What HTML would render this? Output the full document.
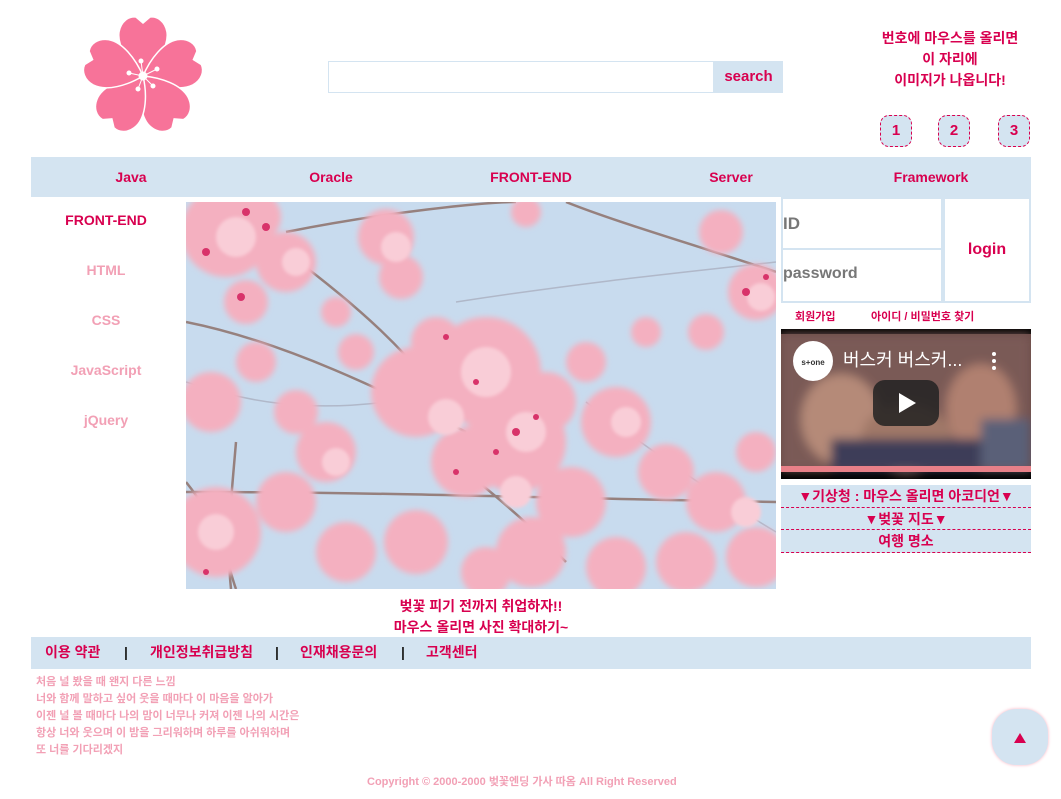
<!DOCTYPE html>
<html><head><meta charset="utf-8">
<style>
*{margin:0;padding:0;box-sizing:border-box}
body{width:1061px;height:799px;background:#fff;font-family:"Liberation Sans","Noto Sans CJK KR",sans-serif;position:relative;overflow:hidden;font-weight:bold}
.a{position:absolute}
.c{color:#d8004f}
.p{color:#f2a0b5}
.lb{background:#d4e4f1}
.nav span{position:absolute;top:0;width:200px;text-align:center;line-height:40px;font-size:14px;color:#d8004f}
.left div{position:absolute;left:0;width:150px;text-align:center;font-size:14px}
.num{position:absolute;top:115px;width:32px;height:32px;border:1px dashed #d8004f;border-radius:9px;background:#d4e4f1;text-align:center;line-height:30px;font-size:15px;color:#d8004f}
.acc div{height:22.7px;border-bottom:1px dashed #d8004f;text-align:center;font-size:14px;color:#d8004f;line-height:22px;background:#d4e4f1}
.poem div{font-size:11px;line-height:17px;color:#f2a0b5}
</style></head><body>

<svg class="a" style="left:80px;top:14px" width="126" height="120" viewBox="0 0 126 120">
<g transform="translate(63,62)" fill="#f77399" stroke="#fff" stroke-width="1.5">
<path id="pt" d="M0,0 C-14,-12 -26,-30 -24,-44 C-22,-55 -14,-60 -7,-59 L0,-53 L7,-59 C14,-60 22,-55 24,-44 C26,-30 14,-12 0,0Z"/>
<use href="#pt" transform="rotate(72)"/><use href="#pt" transform="rotate(144)"/><use href="#pt" transform="rotate(216)"/><use href="#pt" transform="rotate(288)"/>
<g stroke="#fff" stroke-width="1" fill="#fff">
<line x1="0" y1="0" x2="-2" y2="-15"/><circle cx="-2" cy="-15" r="2"/>
<line x1="0" y1="0" x2="14" y2="-7"/><circle cx="14" cy="-7" r="2"/>
<line x1="0" y1="0" x2="10" y2="10"/><circle cx="10" cy="10" r="2"/>
<line x1="0" y1="0" x2="-5" y2="13"/><circle cx="-5" cy="13" r="2"/>
<line x1="0" y1="0" x2="-14" y2="-3"/><circle cx="-14" cy="-3" r="2"/>
<circle cx="0" cy="0" r="4"/></g></g></svg>

<div class="a" style="left:328px;top:61px;width:386px;height:32px;border:1px solid #d4e4f1"></div>
<div class="a lb c" style="left:714px;top:61px;width:69px;height:32px;text-align:center;line-height:32px;font-size:15px">search</div>

<div class="a c" style="left:870px;top:28px;width:160px;text-align:center;font-size:14px;line-height:21px">번호에 마우스를 올리면<br>이 자리에<br>이미지가 나옵니다!</div>
<div class="num" style="left:880px">1</div>
<div class="num" style="left:938px">2</div>
<div class="num" style="left:998px">3</div>

<div class="a lb nav" style="left:31px;top:157px;width:1000px;height:40px">
<span style="left:0">Java</span><span style="left:200px">Oracle</span><span style="left:400px">FRONT-END</span><span style="left:600px">Server</span><span style="left:800px">Framework</span></div>

<div class="a left" style="left:31px;top:212px;width:150px">
<div class="c" style="top:0">FRONT-END</div>
<div class="p" style="top:50px">HTML</div>
<div class="p" style="top:100px">CSS</div>
<div class="p" style="top:150px">JavaScript</div>
<div class="p" style="top:200px">jQuery</div></div>

<svg class="a" style="left:186px;top:202px" width="590" height="387" viewBox="0 0 590 387">
<defs><filter id="b" x="-20%" y="-20%" width="140%" height="140%"><feGaussianBlur stdDeviation="3"/></filter>
<filter id="b2"><feGaussianBlur stdDeviation="1.5"/></filter></defs>
<rect width="590" height="387" fill="#c8dbee"/>
<g stroke="#8a6a62" stroke-width="2.5" fill="none" opacity=".8">
<path d="M100,30 C200,10 300,0 330,0"/><path d="M0,120 C100,140 200,190 280,230"/>
<path d="M0,280 C40,330 40,360 50,387"/><path d="M0,290 C200,290 300,295 590,300"/>
<path d="M380,0 C430,20 500,40 590,70"/><path d="M100,50 C180,110 220,150 250,190"/>
<path d="M280,270 C330,310 350,330 380,360"/><path d="M50,240 C45,300 40,340 45,387"/></g>
<g stroke="#a0a0b0" stroke-width="1.5" fill="none" opacity=".6"><path d="M270,100 C400,80 500,70 590,60"/><path d="M400,200 C480,260 540,300 590,330"/><path d="M0,180 C60,200 120,210 200,200"/></g>
<g filter="url(#b)" fill="#f4b0c0">
<circle cx="40" cy="30" r="45"/><circle cx="100" cy="60" r="30"/><circle cx="70" cy="15" r="25"/>
<circle cx="200" cy="35" r="28"/><circle cx="215" cy="75" r="22"/><circle cx="535" cy="30" r="22"/>
<circle cx="230" cy="190" r="45"/><circle cx="300" cy="170" r="55"/><circle cx="330" cy="240" r="50"/>
<circle cx="280" cy="260" r="35"/><circle cx="360" cy="200" r="30"/><circle cx="250" cy="140" r="25"/>
<circle cx="385" cy="300" r="35"/><circle cx="345" cy="350" r="35"/>
<circle cx="570" cy="90" r="28"/><circle cx="400" cy="160" r="20"/><circle cx="430" cy="220" r="35"/>
<circle cx="480" cy="270" r="28"/><circle cx="530" cy="300" r="30"/><circle cx="570" cy="250" r="20"/>
<circle cx="25" cy="200" r="30"/><circle cx="70" cy="160" r="20"/><circle cx="30" cy="330" r="45"/>
<circle cx="100" cy="300" r="30"/><circle cx="140" cy="250" r="30"/><circle cx="110" cy="210" r="22"/>
<circle cx="160" cy="350" r="30"/><circle cx="230" cy="340" r="32"/><circle cx="300" cy="370" r="25"/>
<circle cx="430" cy="365" r="30"/><circle cx="500" cy="360" r="30"/><circle cx="570" cy="355" r="30"/>
<circle cx="170" cy="150" r="18"/><circle cx="150" cy="110" r="15"/><circle cx="60" cy="100" r="22"/>
<circle cx="460" cy="130" r="15"/><circle cx="520" cy="130" r="18"/><circle cx="340" cy="10" r="15"/></g>
<g filter="url(#b2)" fill="#f9cdd7">
<circle cx="300" cy="170" r="25"/><circle cx="260" cy="215" r="18"/><circle cx="340" cy="230" r="20"/>
<circle cx="50" cy="35" r="20"/><circle cx="110" cy="60" r="14"/><circle cx="210" cy="45" r="15"/>
<circle cx="330" cy="290" r="16"/><circle cx="30" cy="330" r="18"/><circle cx="440" cy="220" r="15"/>
<circle cx="560" cy="310" r="15"/><circle cx="150" cy="260" r="14"/><circle cx="575" cy="95" r="14"/></g>
<g fill="#d8336a"><circle cx="60" cy="10" r="4"/><circle cx="80" cy="25" r="4"/><circle cx="20" cy="50" r="4"/>
<circle cx="55" cy="95" r="4"/><circle cx="260" cy="135" r="3"/><circle cx="290" cy="180" r="3"/>
<circle cx="330" cy="230" r="4"/><circle cx="270" cy="270" r="3"/><circle cx="560" cy="90" r="4"/><circle cx="580" cy="75" r="3"/>
<circle cx="310" cy="250" r="3"/><circle cx="350" cy="215" r="3"/><circle cx="20" cy="370" r="3"/></g>
</svg>

<div class="a c" style="left:186px;top:596px;width:590px;text-align:center;font-size:14px;line-height:21px">벚꽃 피기 전까지 취업하자!!<br>마우스 올리면 사진 확대하기~</div>

<div class="a" style="left:781px;top:197px;width:250px;height:106px;border:1px solid #d4e4f1"></div>
<div class="a" style="left:781px;top:197px;width:162px;height:53px;border:2px solid #d4e4f1;font-size:17px;color:#777;line-height:49px">ID</div>
<div class="a" style="left:781px;top:249px;width:162px;height:54px;border:2px solid #d4e4f1;border-top:none;font-size:16px;color:#777;line-height:50px">password</div>
<div class="a c" style="left:943px;top:197px;width:88px;height:106px;border:2px solid #d4e4f1;text-align:center;line-height:102px;font-size:16px">login</div>
<div class="a c" style="left:795px;top:308px;font-size:11px">회원가입</div>
<div class="a c" style="left:871px;top:308px;font-size:11px">아이디 / 비밀번호 찾기</div>

<svg class="a" style="left:781px;top:329px" width="250" height="150" viewBox="0 0 250 150">
<defs><filter id="vb"><feGaussianBlur stdDeviation="5"/></filter></defs>
<rect width="250" height="150" fill="#000"/>
<rect y="5" width="250" height="137" fill="#6a4a48"/>
<g filter="url(#vb)"><rect y="5" width="250" height="137" fill="#7a5a56"/><ellipse cx="60" cy="90" rx="40" ry="45" fill="#b58a78"/>
<ellipse cx="125" cy="110" rx="45" ry="35" fill="#a07868"/><ellipse cx="200" cy="80" rx="35" ry="45" fill="#b08070"/>
<rect x="50" y="110" width="150" height="32" fill="#3c3c58"/><rect x="200" y="90" width="50" height="50" fill="#5a6078"/></g>
<rect y="137" width="250" height="6" fill="#e88088"/>
<circle cx="32" cy="32" r="20" fill="#fff"/><text x="32" y="36" font-size="8" fill="#333" text-anchor="middle" font-family="Liberation Sans">s+one</text>
<text x="62" y="37" font-size="18" fill="#fff" font-weight="normal" font-family="Liberation Sans,Noto Sans CJK KR,sans-serif">버스커 버스커...</text>
<circle cx="213" cy="25" r="2" fill="#fff"/><circle cx="213" cy="32" r="2" fill="#fff"/><circle cx="213" cy="39" r="2" fill="#fff"/>
<rect x="92" y="51" width="66" height="46" rx="12" fill="#222" opacity=".85"/><path d="M118,64 L118,84 L135,74Z" fill="#fff"/>
</svg>

<div class="a acc" style="left:781px;top:485px;width:250px">
<div>▼기상청 : 마우스 올리면 아코디언▼</div><div>▼벚꽃 지도▼</div><div>여행 명소</div></div>

<div class="a lb" style="left:31px;top:637px;width:1000px;height:32px;font-size:14px;line-height:30px">
<span class="a c" style="left:14px">이용 약관</span><span class="a" style="left:93px;color:#222">|</span>
<span class="a c" style="left:119px">개인정보취급방침</span><span class="a" style="left:244px;color:#222">|</span>
<span class="a c" style="left:269px">인재채용문의</span><span class="a" style="left:370px;color:#222">|</span>
<span class="a c" style="left:395px">고객센터</span></div>

<div class="a poem" style="left:36px;top:674px">
<div>처음 널 봤을 때 왠지 다른 느낌</div><div>너와 함께 말하고 싶어 웃을 때마다 이 마음을 알아가</div>
<div>이젠 널 볼 때마다 나의 맘이 너무나 커져 이젠 나의 시간은</div><div>항상 너와 웃으며 이 밤을 그리워하며 하루를 아쉬워하며</div>
<div>또 너를 기다리겠지</div></div>

<div class="a p" style="left:367px;top:773px;font-size:11px">Copyright © 2000-2000 벚꽃엔딩 가사 따옴 All Right Reserved</div>

<div class="a lb" style="left:992px;top:709px;width:56px;height:56px;border-radius:24px;box-shadow:0 0 3px #f7b0c0"></div>
<svg class="a" style="left:1013px;top:732px" width="14" height="12"><path d="M7,1 L13,11 L1,11Z" fill="#d8004f"/></svg>
</body></html>
